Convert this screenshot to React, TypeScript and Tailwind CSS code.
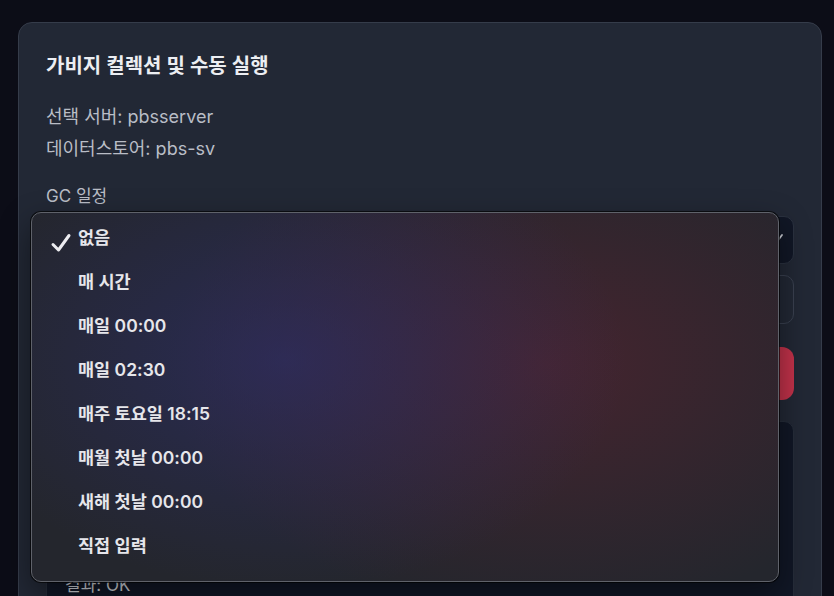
import React from "react";

const items = [
  "없음",
  "매 시간",
  "매일 00:00",
  "매일 02:30",
  "매주 토요일 18:15",
  "매월 첫날 00:00",
  "새해 첫날 00:00",
  "직접 입력",
];

export default function App() {
  return (
    <div className="relative h-[596px] w-[834px] overflow-hidden bg-[#0c0d17] pt-[22px] font-['Inter','Noto_Sans_CJK_KR',sans-serif]">
      <div className="ml-[18px] h-[620px] w-[804px] rounded-[14px] border border-[#353c4a] bg-[#222835] px-[27px] pt-[29px]">
        <h2 className="text-[20px] font-semibold leading-[28px] text-[#eceef2]">
          가비지 컬렉션 및 수동 실행
        </h2>
        <div className="mt-[21px] text-[18px] leading-[32px] text-[#b9bdc6]">
          <div>선택 서버: pbsserver</div>
          <div>데이터스토어: pbs-sv</div>
        </div>
        <div className="mt-[19px] text-[17px] leading-[24px] text-[#b9bdc6]">GC 일정</div>
        <div className="mt-[8px] flex h-[48px] items-center justify-end rounded-[10px] border border-[#2b3240] bg-[#111726] pr-[8px]">
          <svg width="18" height="18" viewBox="0 0 18 18" fill="none" className="text-[#c8cbd2]">
            <path d="M3 6 L9 12 L15 4" stroke="currentColor" strokeWidth="1.8" strokeLinecap="round" strokeLinejoin="round" />
          </svg>
        </div>
        <div className="mt-[11px] h-[49px] rounded-[10px] border border-[#3a4150] bg-[#222835]" />
        <div className="mt-[23px] h-[53px] rounded-[12px] bg-[#c2324a]" />
        <div className="mt-[21px] h-[200px] rounded-[10px] border border-[#262d3a] bg-[#111726] pl-[18px] pt-[150px] text-[17px] leading-[26px] text-[#d0d3d9]">
          <div>결과: OK</div>
        </div>
      </div>

      <div className="absolute left-[31px] top-[212px] h-[370px] w-[748px] rounded-[10px] border border-[#5f626a] bg-[#24262d] bg-[radial-gradient(ellipse_340px_230px_at_34%_40%,rgba(46,48,118,0.55),transparent),radial-gradient(ellipse_380px_250px_at_69%_41%,rgba(105,34,48,0.48),transparent)] pt-[3px] shadow-[0_0_0_1px_rgba(0,0,0,0.65),0_12px_32px_rgba(0,0,0,0.45)]">
        {items.map((label, i) => (
          <div key={label} className="relative flex h-[44px] items-center pl-[46px] text-[17.5px] font-semibold text-[#e6e6eb]">
            {i === 0 && (
              <svg width="22" height="22" viewBox="0 0 22 22" fill="none" className="absolute left-[18px] top-[17px] text-[#ececf0]">
                <path d="M3 11.5 L8.5 17 L19 2.5" stroke="currentColor" strokeWidth="3" strokeLinecap="round" strokeLinejoin="round" />
              </svg>
            )}
            {label}
          </div>
        ))}
      </div>
    </div>
  );
}
